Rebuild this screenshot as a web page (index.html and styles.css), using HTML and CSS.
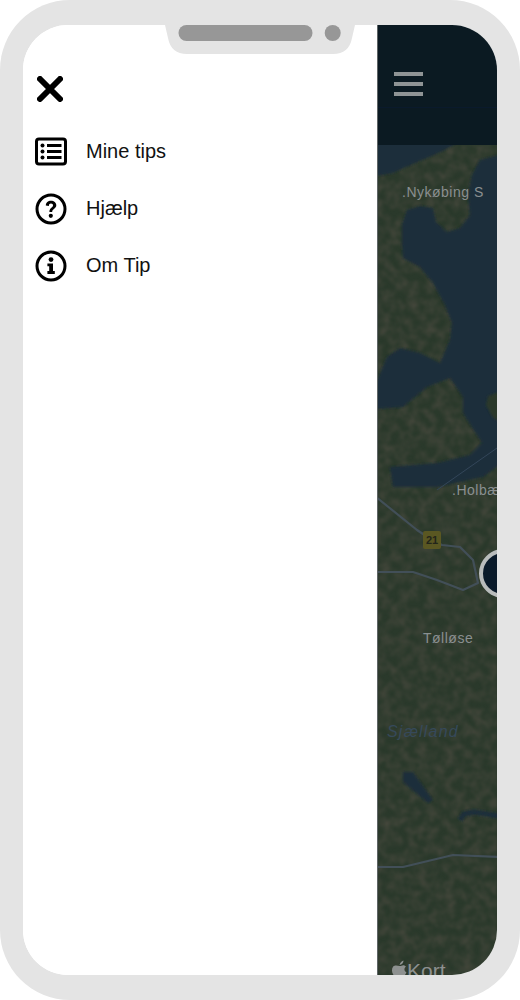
FILE: index.html
```html
<!DOCTYPE html>
<html lang="da">
<head>
    <meta charset="UTF-8">
    <meta name="viewport" content="width=device-width, initial-scale=1.0">
    <title>Tip</title>
    <link rel="stylesheet" href="styles.css">
</head>
<body>
    <div class="phone">
        <div class="screen">
            <nav class="drawer">
                <svg class="close-icon" viewBox="0 0 26 26">
                    <path d="M3 3 L23 23 M23 3 L3 23"></path>
                </svg>
                <a class="menu-item">
                    <svg class="menu-icon" viewBox="0 0 32 32">
                        <rect x="1.5" y="3" width="29" height="25" rx="2.5" class="line"></rect>
                        <circle cx="7.5" cy="9.5" r="2" class="dot"></circle>
                        <circle cx="7.5" cy="15.5" r="2" class="dot"></circle>
                        <circle cx="7.5" cy="21.5" r="2" class="dot"></circle>
                        <path d="M12 9.5 H26.5 M12 15.5 H26.5 M12 21.5 H26.5" class="line"></path>
                    </svg>
                    <span>Mine tips</span>
                </a>
                <a class="menu-item">
                    <svg class="menu-icon" viewBox="0 0 32 32">
                        <circle cx="16" cy="16" r="14" class="line"></circle>
                        <path d="M10.8 12.6 C10.8 9.6 13 7.8 16 7.8 C19 7.8 21.3 9.6 21.3 12.3 C21.3 15.8 17.2 15.9 17.2 19 H14.4 C14.4 14.6 18 14.6 18 12.5 C18 11.3 17.2 10.6 16 10.6 C14.7 10.6 13.9 11.4 13.9 12.9 Z" class="dot"></path>
                        <circle cx="15.8" cy="22.8" r="2.1" class="dot"></circle>
                    </svg>
                    <span>Hjælp</span>
                </a>
                <a class="menu-item">
                    <svg class="menu-icon" viewBox="0 0 32 32">
                        <circle cx="16" cy="16" r="14" class="line"></circle>
                        <circle cx="16" cy="9.6" r="2.4" class="dot"></circle>
                        <path d="M12.4 13.4 H18 V21 H19.8 V24 H12.4 V21 H14.2 V16.2 H12.4 Z" class="dot"></path>
                    </svg>
                    <span>Om Tip</span>
                </a>
            </nav>
            <div class="map-panel">
                <header class="map-header">
                    <div class="burger">
                        <span></span>
                        <span></span>
                        <span></span>
                    </div>
                </header>
                <svg class="map" viewBox="378 145 119 830">
                    <defs>
                        <filter id="soft" x="-5%" y="-5%" width="110%" height="110%">
                            <feGaussianBlur stdDeviation="1.1"></feGaussianBlur>
                        </filter>
                        <filter id="fields" x="0" y="0" width="100%" height="100%" color-interpolation-filters="sRGB">
                            <feTurbulence type="fractalNoise" baseFrequency="0.11" numOctaves="3" seed="7"></feTurbulence>
                            <feColorMatrix type="matrix" values="0 0 0 0 0.42  0 0 0 0 0.36  0 0 0 0 0.33  0.75 0 0 0 -0.26"></feColorMatrix>
                            <feGaussianBlur stdDeviation="0.8"></feGaussianBlur>
                        </filter>
                    </defs>
                    <rect class="land" x="378" y="145" width="119" height="830"></rect>
                    <rect class="noise" x="378" y="145" width="119" height="830" filter="url(#fields)"></rect>
                    <g class="water" filter="url(#soft)">
                        <path d="M376 143 H456 C444 152 425 158 393 173 L376 176 Z"></path>
                        <path d="M499 155 L480 160 L472 175 L468 195 L470 215 L460 228 L447 232 L436 222 L433 208 L420 206 L407 210 L402 225 L402 243 L403 258 L420 267 L433 283 L445 305 L452 323 L450 340 L440 363 L420 353 L400 348 L387 357 L376 383 L376 409 L403 407 L427 387 L450 378 L463 397 L463 413 L482 443 L470 455 L437 463 L390 467 L393 487 L437 487 L483 477 L499 465 Z"></path>
                        <path d="M403 772 L413 772 L433 800 L428 803 L403 782 Z"></path>
                        <path d="M460 820 L464 814 L474 812 L499 816" class="stream"></path>
                    </g>
                    <path class="land-patch" filter="url(#soft)" d="M499 392 L488 396 L486 405 L493 418 L499 421 Z"></path>
                    <g class="roads">
                        <path d="M376 497 L417 530 L432 540 L442 545 L460 547 L473 560 L478 583 L463 590 L437 580 L413 572 L376 572"></path>
                        <path d="M376 867 L403 867 L453 855 L499 857"></path>
                        <path d="M437 490 L497 448" class="road-thin"></path>
                    </g>
                    <rect class="shield" x="423" y="531" width="18" height="18" rx="2"></rect>
                    <text class="shield-num" x="432" y="544">21</text>
                    <text class="place" x="402" y="197">.Nykøbing S</text>
                    <text class="place" x="452" y="495">.Holbæk</text>
                    <text class="place" x="423" y="643">Tølløse</text>
                    <text class="region" x="387" y="737">Sjælland</text>
                    <circle class="pin" cx="503.5" cy="573.5" r="22.5"></circle>
                    <path class="apple" d="M399.5 965 C400 962.5 402 961 403.5 960.5 C403.7 962.5 402 964.8 399.5 965 Z M399.8 966 C401 966 401.9 965.2 403.2 965.2 C404.4 965.2 405.4 965.8 406 966.8 C403.6 968.2 404.2 971.4 406.4 972.2 C406 973.4 405.5 974.4 405 975 L393.5 975 C391.5 972 391.5 968.5 393.2 966.5 C395 964.8 397.5 965.6 399.8 966 Z"></path>
                    <text class="legal" x="407" y="978">Kort</text>
                </svg>
            </div>
        </div>
        <svg class="notch" viewBox="0 0 190 29">
            <path class="notch-body" d="M0 0 H190 L187 13 Q184 29 168 29 H22 Q6 29 3 13 Z"></path>
            <rect class="notch-part" x="13.5" y="0" width="134" height="16" rx="8"></rect>
            <circle class="notch-part" cx="167.7" cy="8" r="8"></circle>
        </svg>
    </div>
</body>
</html>
```

FILE: styles.css
```css
body {
    margin: 0;
    background: #fff;
    font-family: "Liberation Sans", Arial, sans-serif;
}

.phone {
    position: relative;
    box-sizing: border-box;
    width: 520px;
    height: 1000px;
    padding: 25px 23px;
    background: #e4e4e4;
    border-radius: 70px;
}

.screen {
    display: flex;
    height: 950px;
    background: #fff;
    border-radius: 45px;
    overflow: hidden;
}

.drawer {
    display: flex;
    flex-direction: column;
    box-sizing: border-box;
    width: 354px;
    padding: 51px 0 0 12px;
    background: #fff;
}

.close-icon {
    display: block;
    width: 26px;
    height: 26px;
    margin: 0 0 21px 2px;
}

.close-icon path {
    fill: none;
    stroke: #000;
    stroke-width: 6;
    stroke-linecap: round;
}

.menu-item {
    display: flex;
    align-items: center;
    gap: 19px;
    height: 57px;
    color: #111;
    font-size: 20px;
}

.menu-icon {
    display: block;
    flex: none;
    width: 32px;
    height: 32px;
}

.menu-icon .line {
    fill: none;
    stroke: #000;
    stroke-width: 3;
}

.menu-icon .dot {
    fill: #000;
}

.map-panel {
    display: flex;
    flex-direction: column;
    flex: 1;
    border-left: 1px solid #5f6566;
}

.map-header {
    box-sizing: border-box;
    height: 120px;
    padding: 47px 0 0 16px;
    background: linear-gradient(#0b1a22 82px, #0a1a2c 82px, #0a1a2c 83px, #0b1a22 83px);
}

.burger {
    display: flex;
    flex-direction: column;
    gap: 6.5px;
    width: 29px;
}

.burger span {
    height: 3.5px;
    background: #8f9495;
}

.map {
    display: block;
    width: 119px;
    height: 830px;
}

.land,
.land-patch {
    fill: #2a392b;
}

.water {
    fill: #1c2d3a;
}

.water .stream {
    fill: none;
    stroke: #1c2d3a;
    stroke-width: 5;
}

.roads path {
    fill: none;
    stroke: #424f58;
    stroke-width: 2.2;
    stroke-linejoin: round;
}

.roads .road-thin {
    stroke: #33465a;
    stroke-width: 1;
}

.shield {
    fill: #5a5722;
}

.shield-num {
    fill: #23251a;
    font-size: 11px;
    font-weight: bold;
    text-anchor: middle;
}

.place {
    fill: #8a8f90;
    font-size: 14px;
    letter-spacing: 0.5px;
}

.region {
    fill: #36495a;
    font-size: 16px;
    font-style: italic;
    letter-spacing: 1.2px;
}

.pin {
    fill: #0a1a2a;
    stroke: #b9bcbc;
    stroke-width: 4;
}

.apple {
    fill: #8e9190;
}

.legal {
    fill: #8e9190;
    font-size: 21px;
}

.notch {
    position: absolute;
    top: 25px;
    left: 165px;
    width: 190px;
    height: 29px;
}

.notch-body {
    fill: #e4e4e4;
}

.notch-part {
    fill: #979797;
}
```
